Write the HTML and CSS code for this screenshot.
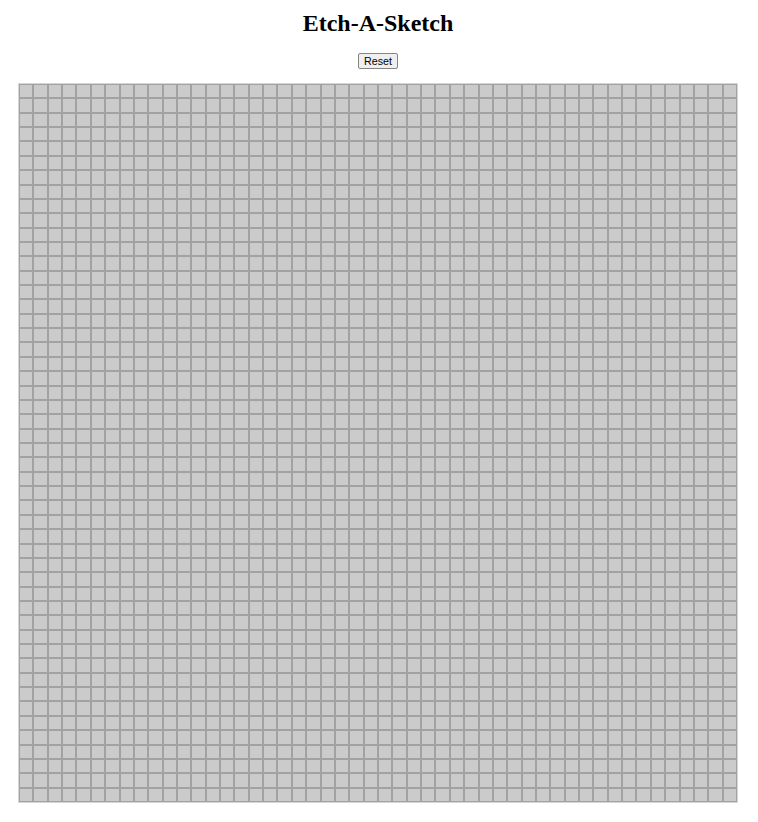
FILE: index.html
```html
<!DOCTYPE html>
<html>

<head>
    <meta charset="utf-8">
    <title>Etch-A-Sketch</title>
    <link rel="stylesheet" href="styles.css">
</head>

<body>
    <div id="sketch">
        <h1 id="title">Etch-A-Sketch</h1>
        <button id="reset-button">Reset</button>
        <div id="board"></div>
    </div>

    <script>
        // build the board of squares
        var boardEl = document.getElementById("board");
        var resetEl = document.getElementById("reset-button");
        var size = 50;

        var makeGrid = function (n) {
            boardEl.innerHTML = "";
            boardEl.style.gridTemplateColumns = "repeat(" + n + ", 1fr)";
            for (var i = 0; i < n * n; i++) {
                var cell = document.createElement("div");
                cell.className = "cell";
                cell.onmouseover = function () {
                    this.classList.add("drawn");
                };
                boardEl.appendChild(cell);
            }
        };

        // reset button clears the board
        resetEl.onclick = function () {
            makeGrid(size);
        };

        makeGrid(size);
    </script>
</body>
</html>
```

FILE: styles.css
```css
body {
    margin: 0;
    background: #fff;
}

#sketch {
    display: flex;
    flex-direction: column;
    align-items: center;
    padding-right: 2px;
}

#title {
    font-family: "Liberation Serif", "Times New Roman", serif;
    font-size: 24px;
    font-weight: bold;
    line-height: 30px;
    margin: 8px 0 0;
    color: #000;
}

#reset-button {
    font-family: "Liberation Sans", Arial, sans-serif;
    font-size: 10.7px;
    line-height: 12px;
    padding: 1px 5px;
    margin-top: 15px;
    color: #000;
    background: #efefef;
    border: 1px solid #858585;
    border-radius: 2px;
}

#board {
    display: grid;
    width: 720px;
    height: 720px;
    box-sizing: border-box;
    margin-top: 14px;
    border: 1px solid #d6d6d6;
    background: #ccc;
}

.cell {
    box-sizing: border-box;
    border: 1px solid #a2a2a2;
    background: #cbcbcb;
}

.drawn {
    background: #333;
}
```
